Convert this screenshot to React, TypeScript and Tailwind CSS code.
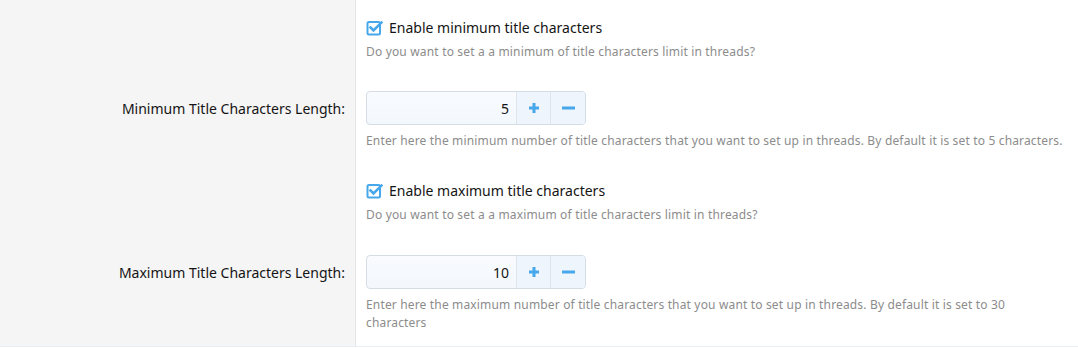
import React from 'react';

const font = { fontFamily: '"Noto Sans", "Open Sans", Arial, sans-serif' };

const CheckIcon = () => (
  <svg width="17" height="17" viewBox="0 0 17 17" fill="none">
    <rect x="1.5" y="3" width="12.5" height="12.5" rx="1.5" stroke="#47a7eb" strokeWidth="2" />
    <path d="M4.5 8.5 L7.5 11.5 L15.5 3.5" stroke="#47a7eb" strokeWidth="2.6" strokeLinecap="square" />
  </svg>
);

const Spinner = ({ value }: { value: number }) => (
  <div className="flex h-[34px] w-[220px] rounded-[4px] border border-[#d6dce4] overflow-hidden bg-gradient-to-b from-[#f9fbfe] to-[#f3f8fd]">
    <div className="flex-1 flex items-center justify-end pr-[7px] text-[14px] text-[#141414]">{value}</div>
    <button className="w-[34px] flex items-center justify-center border-l border-[#dfe5ec] bg-[#eef5fc] text-[#47a7eb]">
      <svg width="12" height="12" viewBox="0 0 12 12"><path d="M6 1v10M1 6h10" stroke="#47a7eb" strokeWidth="3" /></svg>
    </button>
    <button className="w-[35px] flex items-center justify-center border-l border-[#dfe5ec] bg-[#eef5fc]">
      <svg width="13" height="4" viewBox="0 0 13 4"><path d="M0.5 2h12" stroke="#47a7eb" strokeWidth="3" strokeLinecap="round" /></svg>
    </button>
  </div>
);

const CheckRow = ({ label, hint, pb }: { label: string; hint: string; pb: string }) => (
  <div className="flex">
    <div className="w-[356px] shrink-0 bg-[#f5f5f5] border-r border-[#e4e4e4]" />
    <div className={`flex-1 pl-[10px] pt-[17px] ${pb}`}>
      <label className="flex items-center h-5 gap-[6px] text-[14px] text-[#141414]">
        <CheckIcon />
        <span>{label}</span>
      </label>
      <p className="mt-[6px] text-[12px] tracking-[0.17px] leading-[18px] text-[#8c8c8c]">{hint}</p>
    </div>
  </div>
);

const InputRow = ({ label, value, hint, pb }: { label: string; value: number; hint: string; pb: string }) => (
  <div className="flex">
    <div className="w-[356px] shrink-0 bg-[#f5f5f5] border-r border-[#e4e4e4] pt-[10px] pr-[10px]">
      <div className="h-[34px] flex items-center justify-end text-[14px] text-[#141414]">{label}</div>
    </div>
    <div className={`flex-1 pl-[10px] pt-[10px] ${pb}`}>
      <Spinner value={value} />
      <p className="mt-[7px] w-[700px] text-[12px] tracking-[0.16px] leading-[18px] text-[#8c8c8c]">{hint}</p>
    </div>
  </div>
);

export default function App() {
  return (
    <div className="w-[1078px] h-[348px] bg-white overflow-hidden" style={font}>
      <div className="border-b border-[#e6eff6]">
        <CheckRow
          label="Enable minimum title characters"
          hint="Do you want to set a a minimum of title characters limit in threads?"
          pb="pb-[20px]"
        />
        <InputRow
          label="Minimum Title Characters Length:"
          value={5}
          hint="Enter here the minimum number of title characters that you want to set up in threads. By default it is set to 5 characters."
          pb="pb-[13px]"
        />
        <CheckRow
          label="Enable maximum title characters"
          hint="Do you want to set a a maximum of title characters limit in threads?"
          pb="pb-[21px]"
        />
        <InputRow
          label="Maximum Title Characters Length:"
          value={10}
          hint="Enter here the maximum number of title characters that you want to set up in threads. By default it is set to 30 characters"
          pb="pb-[14px]"
        />
      </div>
    </div>
  );
}
